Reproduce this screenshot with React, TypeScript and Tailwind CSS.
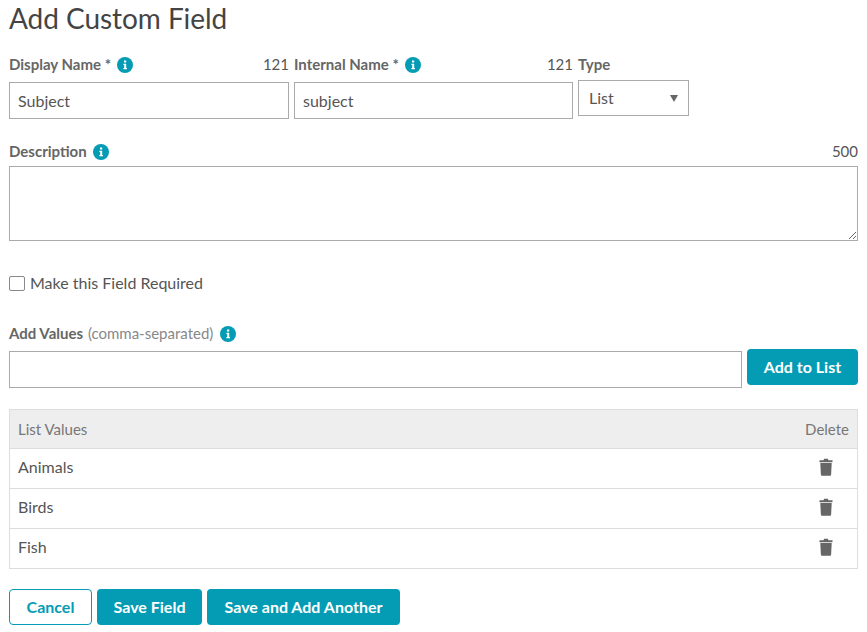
import React from "react";

function Info() {
  return (
    <svg width="16" height="16" viewBox="0 0 16 16" className="shrink-0">
      <circle cx="8" cy="8" r="8" fill="#049cb5" />
      <rect x="7" y="3.5" width="2.2" height="2" fill="#fff" />
      <path d="M6.4 6.8h2.8v4.2h0.8v1.2H6.4V11h0.8V8H6.4z" fill="#fff" />
    </svg>
  );
}

function Trash() {
  return (
    <svg width="14" height="18" viewBox="0 0 14 18">
      <path d="M0.500 2.200h4L5.200 0.800h3.600l0.700 1.400h4v2h-13z" fill="#666" />
      <path d="M1.300 5h11.400l-0.600 11.800q-0.100 1-1.100 1H3q-1 0-1.100-1z" fill="#666" />
    </svg>
  );
}

const Row = ({ name }: { name: string }) => (
  <div className="flex items-center justify-between h-10 border-t border-[#dddddd] pl-2 pr-[24px] pb-[3px]">
    <span>{name}</span>
    <Trash />
  </div>
);

export default function App() {
  return (
    <div className="w-[867px] h-[632px] bg-white px-[9px] text-[16px] text-[#555555] overflow-hidden font-['Lato',sans-serif]">
      <h1 className="text-[28px] leading-[36px] text-[#444444] tracking-[-0.05px]">Add Custom Field</h1>

      <div className="flex gap-[5px] mt-[20px] h-[65px]">
        <div className="w-[280px]">
          <div className="flex items-center justify-between h-[17px] mb-[9px]">
            <span className="flex items-center gap-[6px] font-bold text-[#666666] text-[15px]">Display Name *<Info /></span>
            <span className="text-[15px]">121</span>
          </div>
          <input readOnly value="Subject" className="w-full h-[37px] border border-[#aaaaaa] px-2 outline-none" />
        </div>
        <div className="w-[279px]">
          <div className="flex items-center justify-between h-[17px] mb-[9px]">
            <span className="flex items-center gap-[6px] font-bold text-[#666666] text-[15px]">Internal Name *<Info /></span>
            <span className="text-[15px]">121</span>
          </div>
          <input readOnly value="subject" className="w-full h-[37px] border border-[#aaaaaa] px-2 outline-none" />
        </div>
        <div className="w-[111px]">
          <div className="h-[17px] mb-[7px] flex items-center font-bold text-[15px] text-[#666666]">Type</div>
          <div className="h-[36px] border border-[#aaaaaa] flex items-center justify-between pl-[10px] pr-[10px]">
            <span>List</span>
            <span className="w-0 h-0 border-x-4 border-x-transparent border-t-[7px] border-t-[#666666]" />
          </div>
        </div>
      </div>

      <div className="flex items-center justify-between h-[17px] mt-[22px]">
        <span className="flex items-center gap-[6px] font-bold text-[15px] text-[#666666]">Description<Info /></span>
        <span className="text-[15px]">500</span>
      </div>
      <textarea readOnly className="block w-full h-[75px] border border-[#aaaaaa] mt-[6px] outline-none resize-y" />

      <label className="flex items-center gap-[5px] mt-[33px] h-[18px]">
        <span className="w-4 h-[15px] border border-[#888888] rounded-[2px] bg-white" />
        <span>Make this Field Required</span>
      </label>

      <div className="flex items-center gap-[7px] mt-[33px] h-[17px] text-[15px]">
        <span><b className="font-bold text-[#666666]">Add Values</b> <span className="text-[#888888] ml-[1px]">(comma-separated)</span></span>
        <Info />
      </div>

      <div className="flex gap-[5px] mt-[9px]">
        <input readOnly className="flex-1 h-[37px] border border-[#aaaaaa] outline-none" />
        <button className="w-[111px] h-[36px] -mt-[2px] rounded bg-[#049cb5] text-white font-bold">Add to List</button>
      </div>

      <div className="mt-[21px] border border-[#dddddd]">
        <div className="flex items-center justify-between h-[38px] bg-[#eeeeee] px-2 text-[15px] text-[#777777]">
          <span>List Values</span>
          <span>Delete</span>
        </div>
        <Row name="Animals" />
        <Row name="Birds" />
        <Row name="Fish" />
      </div>

      <div className="flex gap-[5px] mt-[20px]">
        <button className="w-[83px] h-[36px] rounded border border-[#049cb5] text-[#049cb5] font-bold">Cancel</button>
        <button className="w-[105px] h-[36px] rounded bg-[#049cb5] text-white font-bold">Save Field</button>
        <button className="w-[193px] h-[36px] rounded bg-[#049cb5] text-white font-bold">Save and Add Another</button>
      </div>
    </div>
  );
}
